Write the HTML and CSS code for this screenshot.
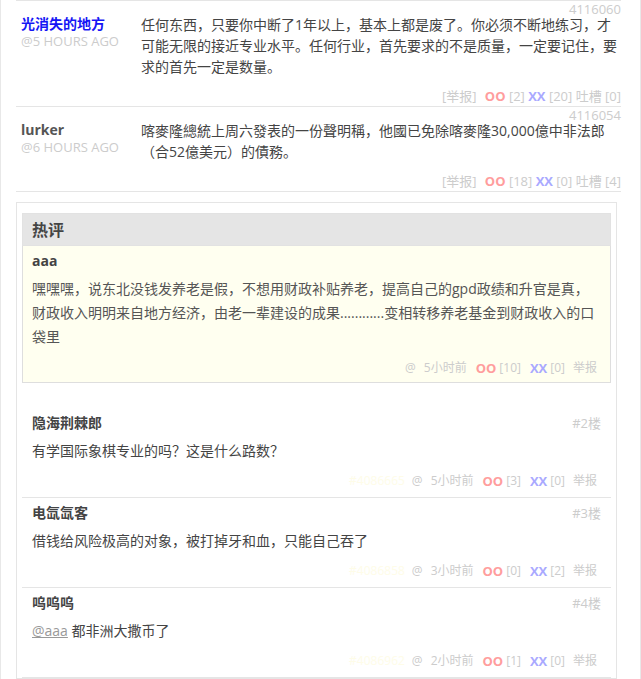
FILE: index.html
```html
<!DOCTYPE html>
<html lang="zh-CN">
<head>
  <meta charset="UTF-8">
  <title>吐槽</title>
  <link rel="stylesheet" href="styles.css">
</head>
<body>
  <div class="page">
    <!-- Top comment list -->
    <ol class="commentlist">
      <li class="entry">
        <div class="entry-id">4116060</div>
        <div class="entry-row">
          <div class="author">
            <strong class="author-name is-link">光消失的地方</strong>
            <small class="author-time">@5 hours ago</small>
          </div>
          <div class="entry-text">任何东西，只要你中断了1年以上，基本上都是废了。你必须不断地练习，才可能无限的接近专业水平。任何行业，首先要求的不是质量，一定要记住，要求的首先一定是数量。</div>
        </div>
        <div class="entry-foot">
          <span class="report">[举报]</span>
          <b class="oo">OO</b> [2] <b class="xx">XX</b> [20] 吐槽 [0]
        </div>
      </li>
      <li class="entry">
        <div class="entry-id">4116054</div>
        <div class="entry-row">
          <div class="author">
            <strong class="author-name">lurker</strong>
            <small class="author-time">@6 hours ago</small>
          </div>
          <div class="entry-text">喀麥隆總統上周六發表的一份聲明稱，他國已免除喀麥隆30,000億中非法郎（合52億美元）的債務。</div>
        </div>
        <div class="entry-foot">
          <span class="report">[举报]</span>
          <b class="oo">OO</b> [18] <b class="xx">XX</b> [0] 吐槽 [4]
        </div>
      </li>
    </ol>

    <!-- Tucao box -->
    <div class="tucao">
      <div class="hot">
        <h3 class="hot-title">热评</h3>
        <div class="hot-body">
          <div class="c-name">aaa</div>
          <p class="hot-text">嘿嘿嘿，说东北没钱发养老是假，不想用财政补贴养老，提高自己的gpd政绩和升官是真，财政收入明明来自地方经济，由老一辈建设的成果............变相转移养老基金到财政收入的口袋里</p>
          <div class="c-foot">
            <span class="c-at">@</span><span class="c-time">5小时前</span><b class="oo c-oo">OO</b><span class="c-num">[10]</span><b class="xx c-xx">XX</b><span class="c-num">[0]</span><span class="c-report">举报</span>
          </div>
        </div>
      </div>

      <ul class="comments">
        <li class="comment">
          <div class="c-head"><span class="c-name">隐海荆棘郎</span><span class="c-floor">#2楼</span></div>
          <p class="c-text">有学国际象棋专业的吗？这是什么路数？</p>
          <div class="c-foot">
            <span class="c-id">#4086665</span><span class="c-at">@</span><span class="c-time">5小时前</span><b class="oo c-oo">OO</b><span class="c-num">[3]</span><b class="xx c-xx">XX</b><span class="c-num">[0]</span><span class="c-report">举报</span>
          </div>
        </li>
        <li class="comment">
          <div class="c-head"><span class="c-name">电氙氙客</span><span class="c-floor">#3楼</span></div>
          <p class="c-text">借钱给风险极高的对象，被打掉牙和血，只能自己吞了</p>
          <div class="c-foot">
            <span class="c-id">#4086858</span><span class="c-at">@</span><span class="c-time">3小时前</span><b class="oo c-oo">OO</b><span class="c-num">[0]</span><b class="xx c-xx">XX</b><span class="c-num">[2]</span><span class="c-report">举报</span>
          </div>
        </li>
        <li class="comment">
          <div class="c-head"><span class="c-name">呜呜呜</span><span class="c-floor">#4楼</span></div>
          <p class="c-text"><a class="mention" href="#">@aaa</a> 都非洲大撒币了</p>
          <div class="c-foot">
            <span class="c-id">#4086962</span><span class="c-at">@</span><span class="c-time">2小时前</span><b class="oo c-oo">OO</b><span class="c-num">[1]</span><b class="xx c-xx">XX</b><span class="c-num">[0]</span><span class="c-report">举报</span>
          </div>
        </li>
      </ul>
    </div>
  </div>
</body>
</html>
```

FILE: styles.css
```css
/* Base */
* { margin: 0; padding: 0; box-sizing: border-box; }
body {
  font-family: "Open Sans", "Noto Sans CJK SC", sans-serif;
  font-size: 14px; color: #444; background-color: #fff;
}
ol, ul { list-style: none; }

.page {
  width: 641px; min-height: 100vh;
  border-left: 1px solid #e8e8e8; border-right: 1px solid #e8e8e8;
  overflow: hidden;
}

/* Top comment list */
.commentlist {
  margin-left: 15px; width: 605px;
  border-top: 1px solid #e5e5e5;
}
.entry { padding: 3px 0 0 5px; border-bottom: 1px solid #e5e5e5; }
.entry-id { text-align: right; font-size: 13px; line-height: 10px; color: #ccc; }
.entry-row { display: flex; }
.author { width: 120px; flex: none; display: flex; flex-direction: column; }
.author-name { font-size: 14px; line-height: 20px; color: #555; }
.author-name.is-link { color: #1616f5; }
.author-time { font-size: 13px; line-height: 14px; color: #ccc; text-transform: uppercase; }
.entry-text { width: 478px; line-height: 21px; color: #444; }
.entry-foot {
  margin-top: 10px; text-align: right;
  font-size: 13px; line-height: 19px; color: #ccc;
}
.entry-foot .report { margin-right: 5px; }

.oo { color: #ff9d9d; font-weight: bold; }
.xx { color: #a9a9ff; font-weight: bold; }

/* Tucao box */
.tucao {
  margin: 10px 0 0 15px; width: 601px;
  border: 1px solid #e5e5e5;
  padding: 10px 5px 0 5px;
}
.hot-title {
  height: 33px; line-height: 33px; padding-left: 9px;
  font-size: 16px; font-weight: bold; color: #444;
  background-color: #e5e5e5; border: 1px solid #e2e2e2;
}
.hot-body {
  background-color: #fffff0;
  border: 1px solid #dedede; border-top: none;
  padding: 5px 6px 4px 9px;
}
.hot-body .c-name { line-height: 20px; }
.hot-text { margin: 6px 7px 0 0; line-height: 24px; color: #555; }
.hot-body .c-foot { margin-top: 9px; padding-right: 7px; }

/* Comments */
.comments { margin-top: 25px; }
.comment { padding: 4px 10px 6px 10px; border-bottom: 1px solid #e5e5e5; }
.c-head { display: flex; justify-content: space-between; align-items: center; height: 20px; }
.c-name { font-weight: bold; color: #444; }
.c-floor { font-size: 13px; color: #ccc; }
.c-text { margin-top: 7px; line-height: 24px; color: #444; }
.mention { color: #999; text-decoration: underline; }

.c-foot {
  display: flex; justify-content: flex-end; align-items: center;
  margin-top: 8px; padding-right: 4px;
  font-size: 12px; line-height: 20px; color: #ccc;
}
.c-id { color: #fefce8; margin-right: 7px; }
.c-at { margin-right: 8px; }
.c-oo { margin-left: 9px; font-size: 13px; }
.c-xx { margin-left: 9px; font-size: 13px; }
.c-num { margin-left: 3px; }
.c-report { margin-left: 8px; }
```
